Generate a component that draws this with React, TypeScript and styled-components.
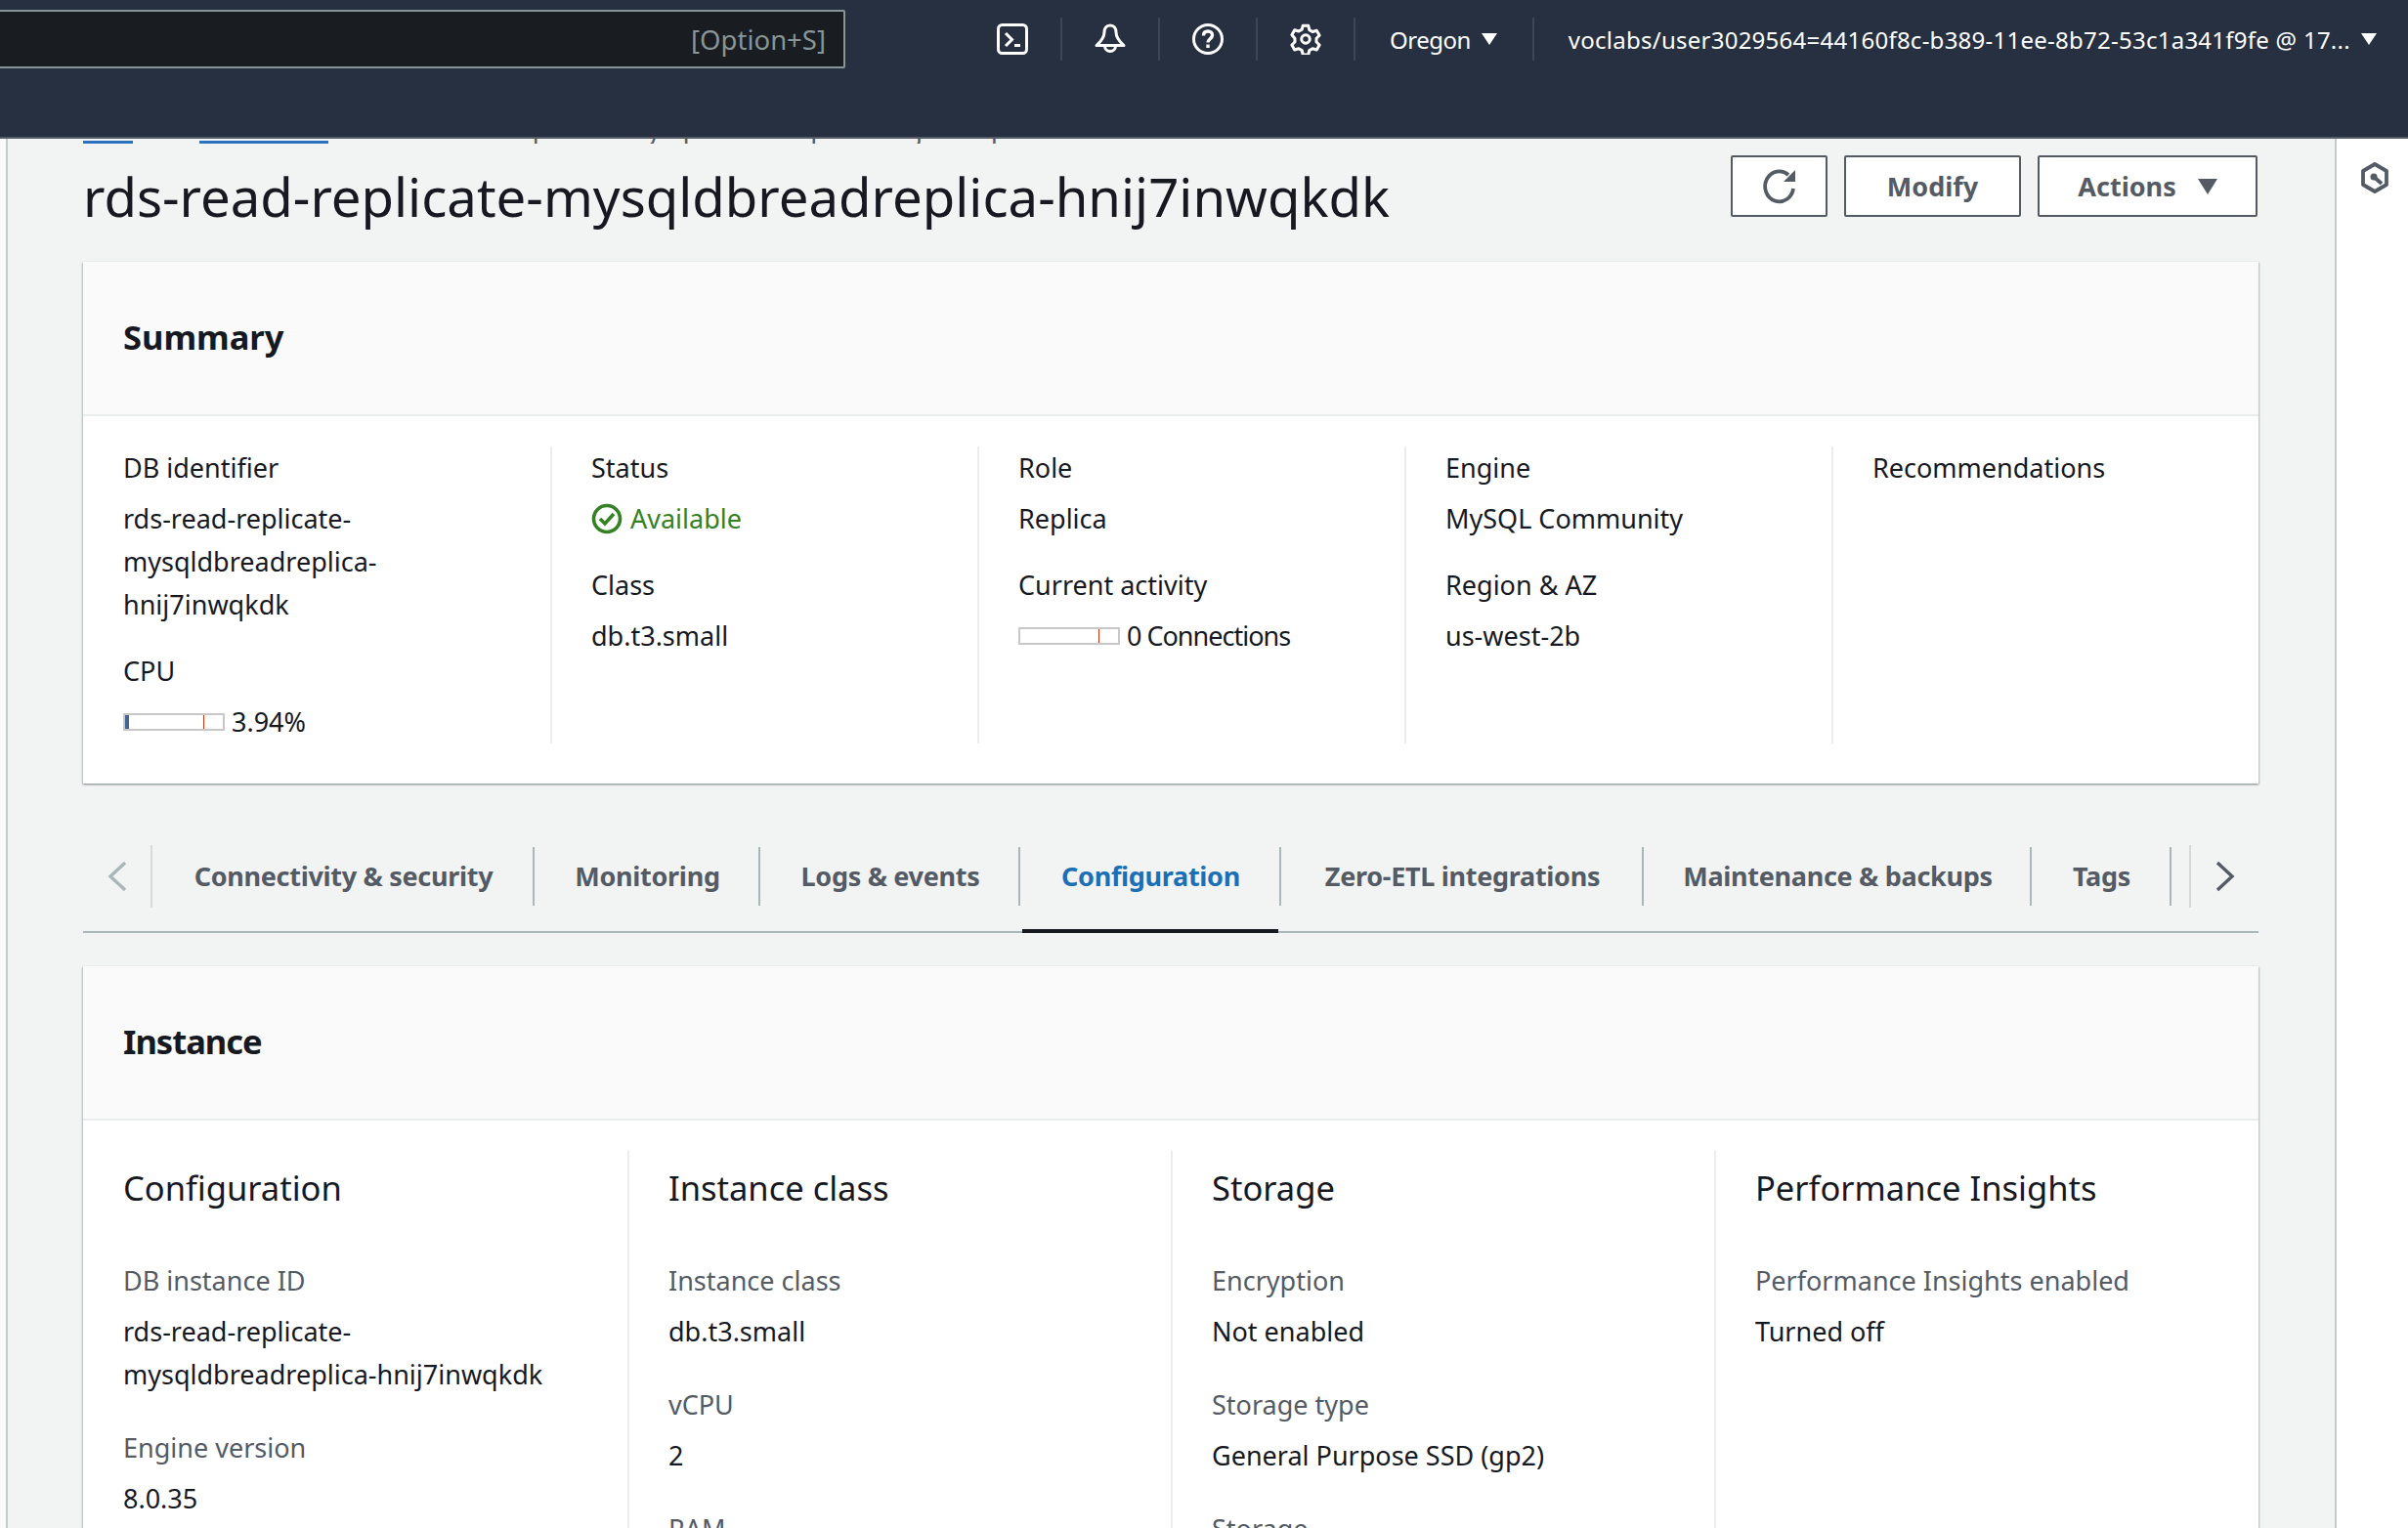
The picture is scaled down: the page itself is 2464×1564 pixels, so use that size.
import { createGlobalStyle, styled } from 'styled-components'

const GlobalStyle = createGlobalStyle`
  html, body {
    margin: 0;
    padding: 0;
    background: #ffffff;
    font-family: "Noto Sans", "Liberation Sans", sans-serif;
    color: #16191f;
  }
`

const Page = styled.div`
  width: 2464px;
  height: 1564px;
  display: flex;
  flex-direction: column;
  overflow: hidden;
`

const Header = styled.header`
  height: 140px;
  flex: none;
  box-sizing: content-box;
  background: #263040;
  border-bottom: 2px solid #545b64;
  display: flex;
  align-items: flex-start;
  color: #ffffff;
  position: relative;
  z-index: 2;
`

const SearchBox = styled.div`
  width: 869px;
  height: 60px;
  margin: 10px 0 0 -4px;
  flex: none;
  box-sizing: border-box;
  border: 2px solid #879596;
  border-radius: 2px;
  background: #191c20;
  display: flex;
  align-items: center;
  justify-content: flex-end;
  padding-right: 18px;
  font-size: 27.500px;
  color: #879596;
`

const NavItems = styled.nav`
  display: flex;
  align-items: center;
  height: 44px;
  margin-top: 18px;
  margin-left: 122px;
`

const IconCell = styled.div`
  width: 100px;
  height: 44px;
  display: flex;
  align-items: center;
  justify-content: center;
  border-right: 2px solid #3b4656;
  box-sizing: border-box;
`

const MenuCell = styled.div<{ $last?: boolean }>`
  height: 44px;
  display: flex;
  align-items: center;
  gap: 11px;
  font-size: 24px;
  white-space: nowrap;
  letter-spacing: ${props => (props.$last ? '0.25px' : '-0.5px')};
  padding: 0 ${props => (props.$last ? '0' : '36px')} 0 ${props => (props.$last ? '35px' : '35px')};
  border-right: ${props => (props.$last ? 'none' : '2px solid #3b4656')};
`

const Caret = styled.span<{ $color?: string; $size?: number }>`
  width: 0;
  height: 0;
  border-left: ${props => props.$size || 8}px solid transparent;
  border-right: ${props => props.$size || 8}px solid transparent;
  border-top: ${props => (props.$size || 8) * 1.600}px solid ${props => props.$color || '#ffffff'};
`

const Body = styled.div`
  flex: 1;
  min-height: 0;
  display: flex;
  background: #f2f3f3;
`

const LeftRail = styled.div`
  width: 6px;
  flex: none;
  border-right: 2px solid #c5cbcc;
  background: #fafafa;
`

const Main = styled.main`
  flex: 1;
  min-width: 0;
  padding: 0 78px 0 77px;
`

const RightRail = styled.aside`
  width: 75px;
  flex: none;
  background: #ffffff;
  border-left: 2px solid #c5cbcc;
  display: flex;
  align-items: flex-start;
  padding: 24px 0 0 24px;
  box-sizing: border-box;
`

const Breadcrumbs = styled.div`
  height: 5px;
  overflow: hidden;
  display: flex;
  align-items: flex-end;
  font-size: 27px;
  gap: 26px;
  color: #545b64;
  line-height: 30px;
  white-space: nowrap;
`

const Crumb = styled.span`
  color: #0073bb;
  border-bottom: 3px solid #2a73c0;
`

const TitleRow = styled.div`
  display: flex;
  justify-content: space-between;
  align-items: flex-start;
  height: 121px;
`

const Title = styled.h1`
  margin: 21px 0 0;
  font-size: 54.500px;
  line-height: 66px;
  font-weight: 400;
  color: #16191f;
`

const Actions = styled.div`
  display: flex;
  gap: 17px;
  margin-top: 12px;
  margin-right: 1px;
`

const Button = styled.button<{ $width: number }>`
  width: ${props => props.$width}px;
  height: 63px;
  box-sizing: border-box;
  background: #ffffff;
  border: 2px solid #545b64;
  border-radius: 2px;
  color: #545b64;
  font: 700 27px "Noto Sans", sans-serif;
  display: flex;
  align-items: center;
  justify-content: center;
  gap: 22px;
  padding: 0;
`

const Card = styled.section`
  background: #ffffff;
  box-shadow: 0 1px 2px rgba(0, 28, 36, 0.3), 1px 1px 2px rgba(0, 28, 36, 0.15), -1px 1px 2px rgba(0, 28, 36, 0.15);
`

const CardHeader = styled.div<{ $spacing?: string }>`
  height: 158px;
  box-sizing: border-box;
  background: #fafafa;
  border-bottom: 2px solid #eaeded;
  display: flex;
  align-items: center;
  padding: 0 0 3px 41px;
  font-size: 34.500px;
  font-weight: 700;
  letter-spacing: ${props => props.$spacing || '0'};
`

const ColumnGrid = styled.div<{ $columns: string; $bottom: number }>`
  display: grid;
  grid-template-columns: ${props => props.$columns};
  padding: 31px 0 ${props => props.$bottom}px 41px;
`

const Column = styled.div<{ $first?: boolean }>`
  padding: 0 40px;
  padding-left: ${props => (props.$first ? '0' : '40px')};
  border-left: ${props => (props.$first ? 'none' : '2px solid #eaeded')};
  margin-left: ${props => (props.$first ? '0' : '-1px')};
  min-width: 0;
`

const Item = styled.div`
  margin-bottom: 24px;
  &:last-child {
    margin-bottom: 0;
  }
`

const DetailItem = styled(Item)`
  margin-bottom: 31px;
`

const Label = styled.div<{ $muted?: boolean }>`
  font-size: 27px;
  line-height: 44px;
  margin-bottom: 8px;
  color: ${props => (props.$muted ? '#545b64' : '#16191f')};
`

const Value = styled.div`
  font-size: 27px;
  line-height: 44px;
  color: #16191f;
`

const StatusValue = styled(Value)`
  display: flex;
  align-items: center;
  gap: 8px;
  color: #348224;
`

const MeterValue = styled(Value)<{ $spacing?: string }>`
  display: flex;
  align-items: center;
  gap: 7px;
  letter-spacing: ${props => props.$spacing || '0'};
`

const Meter = styled.div`
  width: 104px;
  height: 18px;
  flex: none;
  box-sizing: border-box;
  border: 2px solid #c8c8c8;
  background: #ffffff;
  position: relative;
`

const MeterFill = styled.div`
  height: 100%;
  background: #44658f;
`

const MeterMark = styled.div`
  position: absolute;
  top: 0;
  bottom: 0;
  left: 80px;
  width: 1px;
  background: #d13212;
`

const Tabs = styled.div`
  height: 88px;
  margin-top: 63px;
  border-bottom: 2px solid #aab7b8;
  display: flex;
  align-items: flex-start;
`

const TabArrow = styled.div<{ $side: 'left' | 'right' }>`
  height: 64px;
  display: flex;
  align-items: center;
  box-sizing: border-box;
  ${props =>
    props.$side === 'left'
      ? 'width: 71px; padding-left: 25px; border-right: 2px solid #d5dbdb;'
      : 'width: 71px; padding-left: 25px; border-left: 2px solid #d5dbdb; margin-left: 18px;'}
`

const Tab = styled.div<{ $active?: boolean; $width: number }>`
  width: ${props => props.$width}px;
  height: 88px;
  box-sizing: border-box;
  flex: none;
  display: flex;
  justify-content: center;
  padding-top: 2px;
  font-size: 27px;
  font-weight: 700;
  letter-spacing: -0.3px;
  line-height: 60px;
  color: ${props => (props.$active ? '#1a6fb5' : '#545b64')};
  position: relative;
  &::after {
    content: '';
    position: absolute;
    right: 0;
    top: 2px;
    height: 60px;
    width: 2px;
    background: #aab7b8;
  }
  ${props =>
    props.$active
      ? `&::before {
    content: '';
    position: absolute;
    left: 2px;
    right: 3px;
    bottom: -2px;
    height: 4px;
    background: #16191f;
  }`
      : ''}
`

const InstanceCard = styled(Card)`
  margin-top: 34px;
`

const SectionTitle = styled.h3`
  margin: 15px 0 50px;
  font-size: 34.500px;
  line-height: 46px;
  font-weight: 400;
  color: #16191f;
`

const TerminalIcon = () => (
  <svg width="32" height="32" viewBox="0 0 32 32" fill="none" stroke="#fff" strokeWidth="3">
    <rect x="1.500" y="1.500" width="29" height="29" rx="4" />
    <path d="M9 10l6.500 6.500L9 23" />
    <path d="M18 22.500h6" />
  </svg>
)

const BellIcon = () => (
  <svg width="34" height="34" viewBox="0 0 34 34" fill="none" stroke="#fff" strokeWidth="3" strokeLinejoin="round">
    <path d="M17 3c-4 0-6 3-6 7 0 5-3 9-8 13.500h28c-5-4.500-8-8.500-8-13.500 0-4-2-7-6-7z" />
    <path d="M11.500 24a5.500 5.500 0 0 0 11 0" />
  </svg>
)

const HelpIcon = () => (
  <svg width="34" height="34" viewBox="0 0 34 34" fill="none" stroke="#fff" strokeWidth="3">
    <circle cx="17" cy="17" r="14.500" />
    <path d="M12.500 13.500c0-3 2-4.500 4.500-4.500s4.500 1.600 4.500 4c0 3.600-4.500 3.800-4.500 7.500" strokeWidth="3.400" />
    <path d="M17 22.500v3.500" strokeWidth="3.400" />
  </svg>
)

const GearIcon = () => (
  <svg width="32" height="32" viewBox="0 0 34 34" fill="none" stroke="#fff" strokeWidth="3.200" strokeLinejoin="round">
    <path d="M14 2.500h6l1 4.500 3.500 2 4.500-1.300 3 5.300-3.300 3.200v4l3.300 3.200-3 5.300-4.500-1.300-3.500 2-1 4.500h-6l-1-4.500-3.500-2-4.500 1.300-3-5.300 3.300-3.200v-4L2 12.500l3-5.300 4.500 1.300 3.500-2z" />
    <circle cx="17" cy="17" r="4.500" />
  </svg>
)

const RefreshIcon = () => (
  <svg width="38" height="38" viewBox="0 0 38 38" fill="none" stroke="#545b64" strokeWidth="3.800">
    <path d="M33 21a14.500 15.500 0 1 1-5-14" />
    <path d="M35 2v12H23z" fill="#545b64" stroke="none" />
  </svg>
)

const CheckCircle = () => (
  <svg width="32" height="32" viewBox="0 0 32 32" fill="none" stroke="#348224" strokeWidth="3.600">
    <circle cx="16" cy="16" r="13.500" />
    <path d="M9 16l5 5 9-10" />
  </svg>
)

const ChevronLeft = () => (
  <svg width="20" height="32" viewBox="0 0 20 32" fill="none" stroke="#aab7b8" strokeWidth="3.400">
    <path d="M18 2L3 16l15 14" />
  </svg>
)

const ChevronRight = () => (
  <svg width="20" height="32" viewBox="0 0 20 32" fill="none" stroke="#545b64" strokeWidth="3.400">
    <path d="M2 2l15 14L2 30" />
  </svg>
)

const PanelIcon = () => (
  <svg width="30" height="32" viewBox="0 0 30 32" fill="none" stroke="#545b64" strokeWidth="3.800">
    <path d="M15 2l12 7v14l-12 7-12-7V9z" strokeLinejoin="round" />
    <circle cx="14" cy="15" r="3.500" fill="#545b64" stroke="none" />
    <path d="M14 15l8 7" />
  </svg>
)

const tabs = [
  { label: 'Connectivity & security', width: 391 },
  { label: 'Monitoring', width: 231 },
  { label: 'Logs & events', width: 266 },
  { label: 'Configuration', width: 267, active: true },
  { label: 'Zero-ETL integrations', width: 371 },
  { label: 'Maintenance & backups', width: 397 },
  { label: 'Tags', width: 143 },
]

export default function App() {
  return (
    <Page>
      <GlobalStyle />
      <Header>
        <SearchBox>[Option+S]</SearchBox>
        <NavItems>
          <IconCell><TerminalIcon /></IconCell>
          <IconCell><BellIcon /></IconCell>
          <IconCell><HelpIcon /></IconCell>
          <IconCell><GearIcon /></IconCell>
          <MenuCell>Oregon <Caret /></MenuCell>
          <MenuCell $last>
            voclabs/user3029564=44160f8c-b389-11ee-8b72-53c1a341f9fe @ 17... <Caret />
          </MenuCell>
        </NavItems>
      </Header>
      <Body>
        <LeftRail />
        <Main>
          <Breadcrumbs>
            <Crumb>RDS</Crumb>
            <span>&gt;</span>
            <Crumb>Databases</Crumb>
            <span>&gt;</span>
            <span>rds-read-replicate-mysqldbreadreplica-hnij7inwqkdk</span>
          </Breadcrumbs>
          <TitleRow>
            <Title>rds-read-replicate-mysqldbreadreplica-hnij7inwqkdk</Title>
            <Actions>
              <Button $width={99}><RefreshIcon /></Button>
              <Button $width={181}>Modify</Button>
              <Button $width={225}>Actions <Caret $color="#545b64" $size={10} /></Button>
            </Actions>
          </TitleRow>
          <Card>
            <CardHeader>Summary</CardHeader>
            <ColumnGrid $columns="438px 437px 437px 437px 1fr" $bottom={41}>
              <Column $first>
                <Item>
                  <Label>DB identifier</Label>
                  <Value>rds-read-replicate-mysqldbreadreplica-hnij7inwqkdk</Value>
                </Item>
                <Item>
                  <Label>CPU</Label>
                  <MeterValue>
                    <Meter>
                      <MeterFill style={{ width: '3.94%' }} />
                      <MeterMark />
                    </Meter>
                    3.94%
                  </MeterValue>
                </Item>
              </Column>
              <Column>
                <Item>
                  <Label>Status</Label>
                  <StatusValue><CheckCircle />Available</StatusValue>
                </Item>
                <Item>
                  <Label>Class</Label>
                  <Value>db.t3.small</Value>
                </Item>
              </Column>
              <Column>
                <Item>
                  <Label>Role</Label>
                  <Value>Replica</Value>
                </Item>
                <Item>
                  <Label>Current activity</Label>
                  <MeterValue $spacing="-1px">
                    <Meter>
                      <MeterMark />
                    </Meter>
                    0 Connections
                  </MeterValue>
                </Item>
              </Column>
              <Column>
                <Item>
                  <Label>Engine</Label>
                  <Value>MySQL Community</Value>
                </Item>
                <Item>
                  <Label>Region &amp; AZ</Label>
                  <Value>us-west-2b</Value>
                </Item>
              </Column>
              <Column>
                <Item>
                  <Label>Recommendations</Label>
                </Item>
              </Column>
            </ColumnGrid>
          </Card>
          <Tabs>
            <TabArrow $side="left"><ChevronLeft /></TabArrow>
            {tabs.map(tab => (
              <Tab key={tab.label} $width={tab.width} $active={tab.active}>{tab.label}</Tab>
            ))}
            <TabArrow $side="right"><ChevronRight /></TabArrow>
          </Tabs>
          <InstanceCard>
            <CardHeader $spacing="-1px">Instance</CardHeader>
            <ColumnGrid $columns="517px repeat(3, 1fr)" $bottom={41}>
              <Column $first>
                <SectionTitle>Configuration</SectionTitle>
                <DetailItem>
                  <Label $muted>DB instance ID</Label>
                  <Value>rds-read-replicate-mysqldbreadreplica-hnij7inwqkdk</Value>
                </DetailItem>
                <DetailItem>
                  <Label $muted>Engine version</Label>
                  <Value>8.0.35</Value>
                </DetailItem>
              </Column>
              <Column>
                <SectionTitle>Instance class</SectionTitle>
                <DetailItem>
                  <Label $muted>Instance class</Label>
                  <Value>db.t3.small</Value>
                </DetailItem>
                <DetailItem>
                  <Label $muted>vCPU</Label>
                  <Value>2</Value>
                </DetailItem>
                <DetailItem>
                  <Label $muted>RAM</Label>
                  <Value>2 GB</Value>
                </DetailItem>
              </Column>
              <Column>
                <SectionTitle>Storage</SectionTitle>
                <DetailItem>
                  <Label $muted>Encryption</Label>
                  <Value>Not enabled</Value>
                </DetailItem>
                <DetailItem>
                  <Label $muted>Storage type</Label>
                  <Value>General Purpose SSD (gp2)</Value>
                </DetailItem>
                <DetailItem>
                  <Label $muted>Storage</Label>
                  <Value>20 GiB</Value>
                </DetailItem>
              </Column>
              <Column>
                <SectionTitle>Performance Insights</SectionTitle>
                <DetailItem>
                  <Label $muted>Performance Insights enabled</Label>
                  <Value>Turned off</Value>
                </DetailItem>
              </Column>
            </ColumnGrid>
          </InstanceCard>
        </Main>
        <RightRail><PanelIcon /></RightRail>
      </Body>
    </Page>
  )
}
